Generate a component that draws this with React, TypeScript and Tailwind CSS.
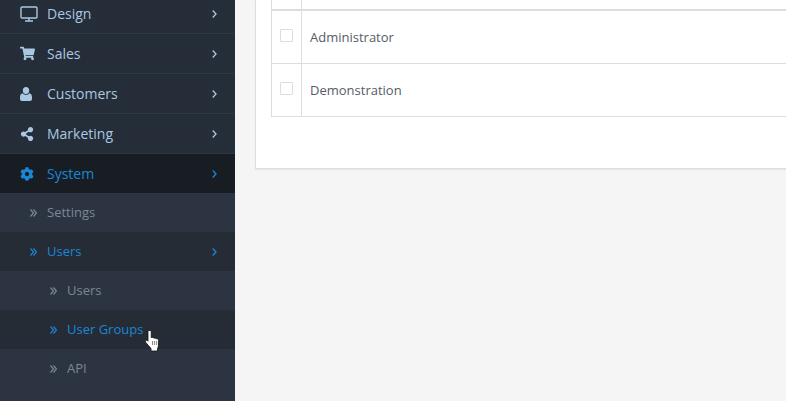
import { FaCog, FaShareAlt, FaShoppingCart } from "react-icons/fa";
import type { ReactNode } from "react";

const Chevron = () => (
  <svg viewBox="0 0 5 8" className="h-[8px] w-[5px] shrink-0" fill="none" stroke="currentColor" strokeWidth="1.3">
    <path d="M.7.5 4 4 .7 7.500" />
  </svg>
);

const DoubleChevron = () => (
  <svg viewBox="0 0 7 8" className="mr-[10px] h-[8px] w-[7px] shrink-0" fill="none" stroke="currentColor" strokeWidth="1.2">
    <path d="M.5.5 3.500 4 .5 7.500M3.500.5 6.500 4 3.500 7.500" />
  </svg>
);

const TvIcon = () => (
  <svg viewBox="0 0 18 16" className="h-[16px] w-[18px]" fill="none" stroke="currentColor">
    <rect x="1" y="1" width="16" height="11" rx="1" strokeWidth="1.400" />
    <path d="M9 12v2.500M5 15h8" strokeWidth="1.400" />
  </svg>
);

const UserIcon = () => (
  <svg viewBox="0 0 12 14" className="h-[14px] w-[12px]" fill="currentColor">
    <ellipse cx="6" cy="3.500" rx="3.200" ry="3.500" />
    <path d="M2.600 6.300C3.500 7.300 4.700 7.800 6 7.800s2.500-.5 3.400-1.500c1.700.3 2.600 1.800 2.600 4.200v1.500c0 1.200-.8 2-2 2H2c-1.200 0-2-.8-2-2v-1.500c0-2.400.9-3.900 2.600-4.200z" />
  </svg>
);

interface MainRowProps {
  icon: ReactNode;
  label: string;
  active?: boolean;
}

const MainRow = ({ icon, label, active }: MainRowProps) => (
  <li
    className={
      active
        ? "flex h-[39px] items-center bg-[#181d24] pl-[20px] pr-[18px] text-[#1a87d6]"
        : "flex h-[40px] items-center border-b border-[#2f3845] pl-[20px] pr-[18px] text-[#a9c8e2]"
    }
  >
    <span className="flex w-[27px] shrink-0 items-center">{icon}</span>
    <span className="flex-1 text-[14px]">{label}</span>
    <Chevron />
  </li>
);

interface SubRowProps {
  label: string;
  indent?: boolean;
  active?: boolean;
  arrow?: boolean;
}

const SubRow = ({ label, indent, active, arrow }: SubRowProps) => (
  <li
    className={`flex h-[39px] items-center pr-[18px] text-[13px] ${indent ? "pl-[50px]" : "pl-[30px]"} ${
      active ? "bg-[#252c35] text-[#1a87d6]" : "text-[#7b8796]"
    }`}
  >
    <DoubleChevron />
    <span className="flex-1">{label}</span>
    {arrow && <Chevron />}
  </li>
);

// pointer hand sitting over the User Groups row
const HandCursor = () => (
  <svg viewBox="0 0 16 22" className="pointer-events-none absolute left-[145px] top-[330px] h-[22px] w-[16px]">
    <path
      d="M4 .5h1c.8 0 1.200.6 1.200 1.500v5.500h1.300c.6 0 1 .2 1.200.6h1.300c.6 0 1 .3 1.200.7h.8c1 0 1.500.6 1.500 1.500V15c0 1.500-.4 2.500-1 3.500v2.500H6v-2.500L.8 12.500c-1-1.300.4-2.800 1.700-1.800l.5.5V2c0-.9.300-1.500 1-1.500z"
      fill="#fff"
      stroke="#111"
      strokeWidth=".8"
    />
    <path d="M7.500 11v4M9.600 11v4M11.700 11v4" stroke="#555" strokeWidth=".7" fill="none" />
  </svg>
);

const GroupRow = ({ name }: { name: string }) => (
  <div className="flex h-[53px] border-b border-[#dddddd]">
    <div className="flex w-[30px] shrink-0 justify-center border-r border-[#dddddd] pt-[18px]">
      <span className="h-[13px] w-[13px] rounded-[1px] border border-[#dddddd] bg-white" />
    </div>
    <div className="flex flex-1 items-center pl-[8px] pt-[2px] text-[13px] text-[#555c66]">{name}</div>
  </div>
);

const App = () => (
  <div className="relative flex h-[401px] w-[786px] overflow-hidden bg-[#f5f5f5] font-['Open_Sans',sans-serif]">
    <nav className="h-full w-[235px] shrink-0 overflow-hidden bg-[#2c3442]">
      <ul className="-mt-[6px] bg-[#252d38]">
        <MainRow icon={<TvIcon />} label="Design" />
        <MainRow icon={<FaShoppingCart className="h-[15px] w-[15px]" />} label="Sales" />
        <MainRow icon={<UserIcon />} label="Customers" />
        <MainRow icon={<FaShareAlt className="h-[14px] w-[14px]" />} label="Marketing" />
        <MainRow icon={<FaCog className="h-[14px] w-[14px]" />} label="System" active />
      </ul>
      <ul>
        <SubRow label="Settings" />
        <SubRow label="Users" active arrow />
        <SubRow label="Users" indent />
        <SubRow label="User Groups" indent active />
        <SubRow label="API" indent />
      </ul>
    </nav>
    <main className="min-w-0 flex-1 pl-[20px]">
      <div className="h-[169px] border-b border-l border-[#dddddd] bg-white pl-[15px] shadow-[0_1px_1px_rgba(0,0,0,0.05)]">
        <div className="border-l border-[#dddddd]">
          <div className="flex h-[11px] border-b-2 border-[#dddddd]">
            <div className="w-[30px] shrink-0 border-r border-[#dddddd]" />
          </div>
          <GroupRow name="Administrator" />
          <GroupRow name="Demonstration" />
        </div>
      </div>
    </main>
    <HandCursor />
  </div>
);

export default App;
